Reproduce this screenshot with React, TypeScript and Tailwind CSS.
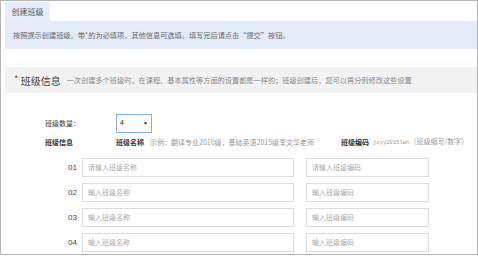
import React from "react"

const rows = [
  { no: "01", name: "请输入班级名称", code: "请输入班级编码" },
  { no: "02", name: "输入班级名称", code: "输入班级编码" },
  { no: "03", name: "输入班级名称", code: "输入班级编码" },
  { no: "04", name: "输入班级名称", code: "输入班级编码" },
]

export default function App() {
  return (
    <div className="w-[478px] h-[256px] bg-white font-['Noto_Sans_CJK_SC',sans-serif]">
      <div className="w-[478px] h-[255px] border border-[#b5b5b5] overflow-hidden">
        <div className="pl-[4px] pt-[1px]">
          {/* tab */}
          <div className="h-[19px] w-[45px] bg-[#e6edf8] flex items-center justify-center text-[8px] text-[#555]">
            创建班级
          </div>

          {/* tip */}
          <div className="h-[28px] bg-[#e4ebf8] flex items-center pl-[8px] text-[7.2px] text-[#666] whitespace-nowrap">
            按照提示创建班级。带<span className="text-[#e33]">*</span>的为必填项，其他信息可选填。填写完后请点击“提交”按钮。
          </div>

          {/* section head */}
          <div className="mt-[18px] h-[26px] bg-[#f2f2f2] flex items-center pl-[9px] whitespace-nowrap">
            <span className="text-[#e33] text-[10px] leading-none mr-[2px] -mt-[3px]">*</span>
            <span className="text-[10px] text-[#444]">班级信息</span>
            <span className="ml-[6px] text-[7.2px] text-[#888]">
              一次创建多个班级时，在课程、基本属性等方面的设置都是一样的；班级创建后，您可以再分别修改这些设置
            </span>
          </div>

          {/* form */}
          <div className="mt-[21px] text-[7px] text-[#333]">
            <div className="flex items-center h-[19px]">
              <span className="ml-[40px] w-[71px]">班级数量：</span>
              <div className="w-[36px] h-[19px] border border-[#80b3e0] flex items-center justify-between px-[3px] font-['Liberation_Sans',sans-serif] text-[7px] text-[#222]">
                <span>4</span>
                <span className="text-[5px]">▼</span>
              </div>
            </div>

            <div className="flex items-center h-[12px] mt-[3px] whitespace-nowrap">
              <span className="ml-[40px] w-[71px] font-bold">班级信息</span>
              <span className="font-bold">班级名称</span>
              <span className="ml-[6px] text-[#999]">示例：翻译专业2010级，基础英语2015级李文华老师</span>
              <span className="ml-[27px] font-bold">班级编码</span>
              <span className="ml-[4px] text-[#999]">
                <span className="font-['Liberation_Mono',monospace] text-[5.5px]">jcyy2015lwh</span>（班级缩写/数字）
              </span>
            </div>

            <div className="mt-[10px] flex flex-col gap-[6px]">
              {rows.map((r) => (
                <div key={r.no} className="flex items-center h-[19px]">
                  <span className="w-[72px] text-right font-['Liberation_Sans',sans-serif] text-[8px] text-[#444]">
                    {r.no}
                  </span>
                  <div className="ml-[5px] w-[212px] h-[19px] border border-[#dcdcdc] flex items-center pl-[5px] text-[#aaa]">
                    {r.name}
                  </div>
                  <div className="ml-[12px] w-[123px] h-[19px] border border-[#dcdcdc] flex items-center pl-[5px] text-[#aaa]">
                    {r.code}
                  </div>
                </div>
              ))}
            </div>
          </div>
        </div>
      </div>
    </div>
  )
}
